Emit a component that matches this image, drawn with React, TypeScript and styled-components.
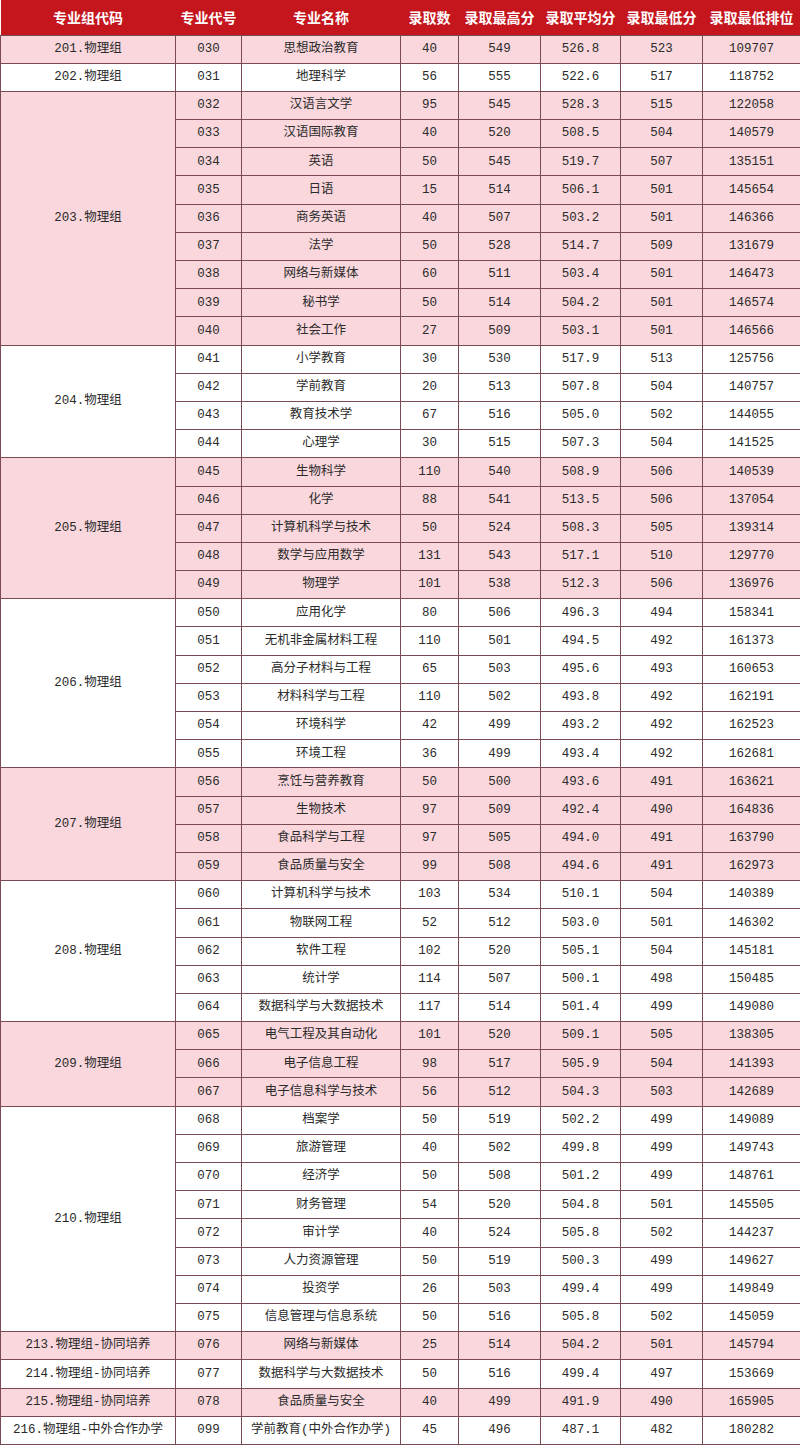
import { FC } from 'react';
import styled, { createGlobalStyle } from 'styled-components';

type Major = [string, string, number, number, string, number, number];

interface Group {
	code: string;
	majors: Major[];
}

const groups: Group[] = [
	{ code: '201.物理组', majors: [['030', '思想政治教育', 40, 549, '526.8', 523, 109707]] },
	{ code: '202.物理组', majors: [['031', '地理科学', 56, 555, '522.6', 517, 118752]] },
	{
		code: '203.物理组',
		majors: [
			['032', '汉语言文学', 95, 545, '528.3', 515, 122058],
			['033', '汉语国际教育', 40, 520, '508.5', 504, 140579],
			['034', '英语', 50, 545, '519.7', 507, 135151],
			['035', '日语', 15, 514, '506.1', 501, 145654],
			['036', '商务英语', 40, 507, '503.2', 501, 146366],
			['037', '法学', 50, 528, '514.7', 509, 131679],
			['038', '网络与新媒体', 60, 511, '503.4', 501, 146473],
			['039', '秘书学', 50, 514, '504.2', 501, 146574],
			['040', '社会工作', 27, 509, '503.1', 501, 146566],
		],
	},
	{
		code: '204.物理组',
		majors: [
			['041', '小学教育', 30, 530, '517.9', 513, 125756],
			['042', '学前教育', 20, 513, '507.8', 504, 140757],
			['043', '教育技术学', 67, 516, '505.0', 502, 144055],
			['044', '心理学', 30, 515, '507.3', 504, 141525],
		],
	},
	{
		code: '205.物理组',
		majors: [
			['045', '生物科学', 110, 540, '508.9', 506, 140539],
			['046', '化学', 88, 541, '513.5', 506, 137054],
			['047', '计算机科学与技术', 50, 524, '508.3', 505, 139314],
			['048', '数学与应用数学', 131, 543, '517.1', 510, 129770],
			['049', '物理学', 101, 538, '512.3', 506, 136976],
		],
	},
	{
		code: '206.物理组',
		majors: [
			['050', '应用化学', 80, 506, '496.3', 494, 158341],
			['051', '无机非金属材料工程', 110, 501, '494.5', 492, 161373],
			['052', '高分子材料与工程', 65, 503, '495.6', 493, 160653],
			['053', '材料科学与工程', 110, 502, '493.8', 492, 162191],
			['054', '环境科学', 42, 499, '493.2', 492, 162523],
			['055', '环境工程', 36, 499, '493.4', 492, 162681],
		],
	},
	{
		code: '207.物理组',
		majors: [
			['056', '烹饪与营养教育', 50, 500, '493.6', 491, 163621],
			['057', '生物技术', 97, 509, '492.4', 490, 164836],
			['058', '食品科学与工程', 97, 505, '494.0', 491, 163790],
			['059', '食品质量与安全', 99, 508, '494.6', 491, 162973],
		],
	},
	{
		code: '208.物理组',
		majors: [
			['060', '计算机科学与技术', 103, 534, '510.1', 504, 140389],
			['061', '物联网工程', 52, 512, '503.0', 501, 146302],
			['062', '软件工程', 102, 520, '505.1', 504, 145181],
			['063', '统计学', 114, 507, '500.1', 498, 150485],
			['064', '数据科学与大数据技术', 117, 514, '501.4', 499, 149080],
		],
	},
	{
		code: '209.物理组',
		majors: [
			['065', '电气工程及其自动化', 101, 520, '509.1', 505, 138305],
			['066', '电子信息工程', 98, 517, '505.9', 504, 141393],
			['067', '电子信息科学与技术', 56, 512, '504.3', 503, 142689],
		],
	},
	{
		code: '210.物理组',
		majors: [
			['068', '档案学', 50, 519, '502.2', 499, 149089],
			['069', '旅游管理', 40, 502, '499.8', 499, 149743],
			['070', '经济学', 50, 508, '501.2', 499, 148761],
			['071', '财务管理', 54, 520, '504.8', 501, 145505],
			['072', '审计学', 40, 524, '505.8', 502, 144237],
			['073', '人力资源管理', 50, 519, '500.3', 499, 149627],
			['074', '投资学', 26, 503, '499.4', 499, 149849],
			['075', '信息管理与信息系统', 50, 516, '505.8', 502, 145059],
		],
	},
	{ code: '213.物理组-协同培养', majors: [['076', '网络与新媒体', 25, 514, '504.2', 501, 145794]] },
	{ code: '214.物理组-协同培养', majors: [['077', '数据科学与大数据技术', 50, 516, '499.4', 497, 153669]] },
	{ code: '215.物理组-协同培养', majors: [['078', '食品质量与安全', 40, 499, '491.9', 490, 165905]] },
	{ code: '216.物理组-中外合作办学', majors: [['099', '学前教育(中外合作办学)', 45, 496, '487.1', 482, 180282]] },
];

const columns = [
	{ title: '专业组代码', width: 175 },
	{ title: '专业代号', width: 66 },
	{ title: '专业名称', width: 159 },
	{ title: '录取数', width: 58 },
	{ title: '录取最高分', width: 82 },
	{ title: '录取平均分', width: 80 },
	{ title: '录取最低分', width: 82 },
	{ title: '录取最低排位', width: 98 },
];

const App: FC = () => (
	<>
		<GlobalStyle />
		<Table>
			<colgroup>
				{columns.map((c) => (
					<col key={c.title} style={{ width: c.width }} />
				))}
			</colgroup>
			<thead>
				<HeadRow>
					{columns.map((c) => (
						<HeadCell key={c.title}>{c.title}</HeadCell>
					))}
				</HeadRow>
			</thead>
			<tbody>
				{groups.map((g, gi) =>
					g.majors.map((m, mi) => (
						<Row key={m[0]} $pink={gi % 2 === 0}>
							{mi === 0 && <Cell rowSpan={g.majors.length}>{g.code}</Cell>}
							{m.map((v, vi) => (
								<Cell key={vi}>{v}</Cell>
							))}
						</Row>
					)),
				)}
			</tbody>
		</Table>
	</>
);

export default App;

const GlobalStyle = createGlobalStyle`
	body {
		margin: 0;
		background: #ffffff;
	}
`;

const Table = styled.table`
	width: 800px;
	table-layout: fixed;
	border-collapse: collapse;
	font-family: 'Liberation Mono', 'Noto Sans CJK SC', monospace;
	font-size: 12.5px;
	color: #2b2b2b;
	text-align: center;
	border-bottom: 1px solid #6e3f47;
`;

const HeadRow = styled.tr`
	height: 35px;
	background: #c5151d;
`;

const HeadCell = styled.th`
	padding: 0;
	color: #ffffff;
	font-family: 'Noto Sans CJK SC', sans-serif;
	font-size: 14px;
	font-weight: 700;
	white-space: nowrap;
`;

const Row = styled.tr<{ $pink: boolean }>`
	height: 28.2px;
	background: ${(p) => (p.$pink ? '#f9d7dc' : '#ffffff')};
`;

const Cell = styled.td`
	padding: 0;
	border: 1px solid #7a4b53;
	white-space: nowrap;
	line-height: 1;
`;
